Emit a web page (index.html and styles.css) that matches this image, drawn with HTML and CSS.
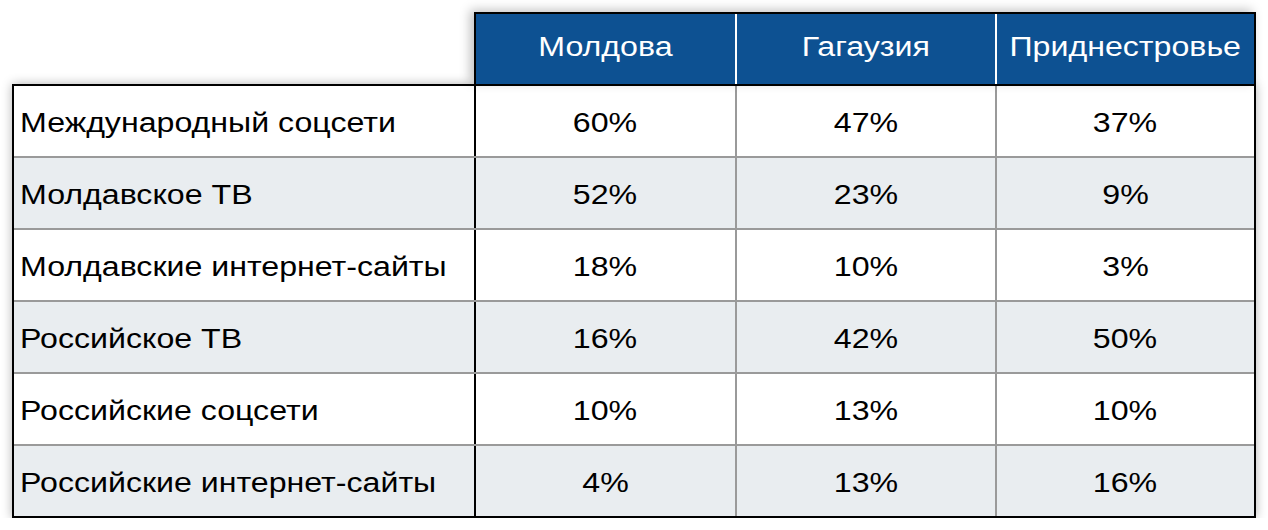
FILE: index.html
```html
<!DOCTYPE html>
<html lang="ru">
<head>
<meta charset="utf-8">
<link rel="stylesheet" href="styles.css">
</head>
<body>
<div class="page">
  <div class="head">
    <div class="hcell"><span class="t">Молдова</span></div>
    <div class="hcell"><span class="t">Гагаузия</span></div>
    <div class="hcell"><span class="t">Приднестровье</span></div>
  </div>
  <div class="table">
    <div class="row">
      <div class="label"><span class="t">Международный соцсети</span></div>
      <div class="val first"><span class="t">60%</span></div>
      <div class="val"><span class="t">47%</span></div>
      <div class="val"><span class="t">37%</span></div>
    </div>
    <div class="row alt">
      <div class="label"><span class="t">Молдавское ТВ</span></div>
      <div class="val first"><span class="t">52%</span></div>
      <div class="val"><span class="t">23%</span></div>
      <div class="val"><span class="t">9%</span></div>
    </div>
    <div class="row">
      <div class="label"><span class="t">Молдавские интернет-сайты</span></div>
      <div class="val first"><span class="t">18%</span></div>
      <div class="val"><span class="t">10%</span></div>
      <div class="val"><span class="t">3%</span></div>
    </div>
    <div class="row alt">
      <div class="label"><span class="t">Российское ТВ</span></div>
      <div class="val first"><span class="t">16%</span></div>
      <div class="val"><span class="t">42%</span></div>
      <div class="val"><span class="t">50%</span></div>
    </div>
    <div class="row">
      <div class="label"><span class="t">Российские соцсети</span></div>
      <div class="val first"><span class="t">10%</span></div>
      <div class="val"><span class="t">13%</span></div>
      <div class="val"><span class="t">10%</span></div>
    </div>
    <div class="row alt last">
      <div class="label"><span class="t">Российские интернет-сайты</span></div>
      <div class="val first"><span class="t">4%</span></div>
      <div class="val"><span class="t">13%</span></div>
      <div class="val"><span class="t">16%</span></div>
    </div>
  </div>
</div>
</body>
</html>
```
FILE: styles.css
```css
html, body {
  margin: 0;
  padding: 0;
  background: #ffffff;
}
.page {
  padding: 12px 0 0 12px;
  font-family: "Liberation Sans", Arial, sans-serif;
  font-size: 27px;
  color: #000;
}
.t {
  display: inline-block;
  transform: scaleX(1.19);
  white-space: nowrap;
}
.head {
  margin-left: 462px;
  width: 782px;
  box-sizing: border-box;
  border: 2px solid #000;
  border-bottom: none;
  background: #0d5192;
  display: grid;
  grid-template-columns: 259px 260px 259px;
  height: 72px;
  box-shadow: -4px -2px 10px rgba(0,0,0,0.25);
  position: relative;
}
.hcell {
  color: #fff;
  display: flex;
  align-items: center;
  justify-content: center;
  padding-bottom: 4px;
}
.hcell + .hcell {
  border-left: 2px solid #fff;
}
.table {
  width: 1244px;
  box-sizing: border-box;
  border: 2px solid #000;
  box-shadow: 0 0 10px rgba(0,0,0,0.3);
}
.row {
  display: grid;
  grid-template-columns: 460px 261px 260px 259px;
  height: 72px;
  box-sizing: border-box;
  border-bottom: 2px solid #9a9a9a;
  background: #fff;
}
.row.last {
  height: 70px;
  border-bottom: none;
}
.row.alt {
  background: #e9edf0;
}
.label {
  display: flex;
  align-items: center;
  padding: 4px 0 0 6px;
}
.label .t {
  transform-origin: left center;
}
.val {
  display: flex;
  align-items: center;
  justify-content: center;
  padding-top: 4px;
  border-left: 2px solid #9a9a9a;
}
.val.first {
  border-left-color: #000;
}
```
